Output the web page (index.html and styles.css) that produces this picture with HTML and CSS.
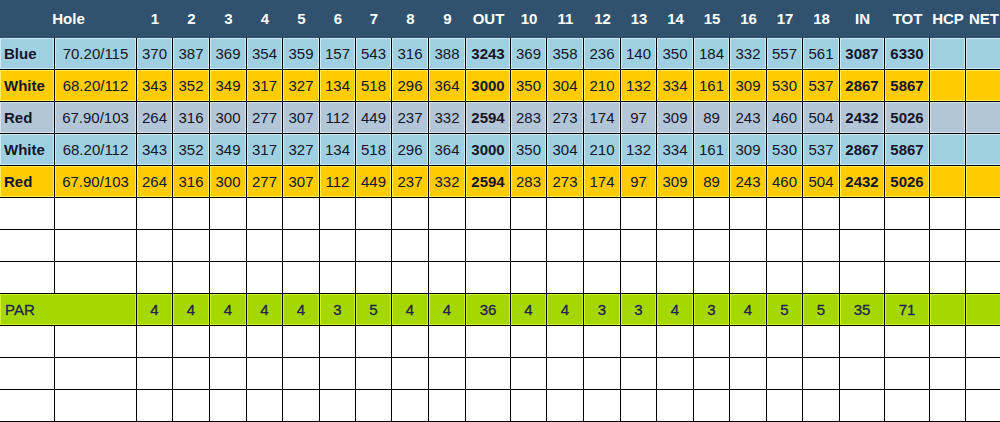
FILE: index.html
```html
<!DOCTYPE html>
<html>
<head>
<meta charset="utf-8">
<link rel="stylesheet" href="styles.css">
</head>
<body>
<div class="card">
  <div class="row head">
    <div class="c span2">Hole</div>
    <div class="c">1</div><div class="c">2</div><div class="c">3</div><div class="c">4</div><div class="c">5</div><div class="c">6</div><div class="c">7</div><div class="c">8</div><div class="c">9</div>
    <div class="c">OUT</div>
    <div class="c">10</div><div class="c">11</div><div class="c">12</div><div class="c">13</div><div class="c">14</div><div class="c">15</div><div class="c">16</div><div class="c">17</div><div class="c">18</div>
    <div class="c">IN</div><div class="c">TOT</div><div class="c">HCP</div><div class="c">NET</div>
  </div>

  <div class="row blue">
    <div class="c lbl">Blue</div><div class="c">70.20/115</div>
    <div class="c">370</div><div class="c">387</div><div class="c">369</div><div class="c">354</div><div class="c">359</div><div class="c">157</div><div class="c">543</div><div class="c">316</div><div class="c">388</div>
    <div class="c b">3243</div>
    <div class="c">369</div><div class="c">358</div><div class="c">236</div><div class="c">140</div><div class="c">350</div><div class="c">184</div><div class="c">332</div><div class="c">557</div><div class="c">561</div>
    <div class="c b">3087</div><div class="c b">6330</div><div class="c"></div><div class="c"></div>
  </div>

  <div class="row yellow">
    <div class="c lbl">White</div><div class="c">68.20/112</div>
    <div class="c">343</div><div class="c">352</div><div class="c">349</div><div class="c">317</div><div class="c">327</div><div class="c">134</div><div class="c">518</div><div class="c">296</div><div class="c">364</div>
    <div class="c b">3000</div>
    <div class="c">350</div><div class="c">304</div><div class="c">210</div><div class="c">132</div><div class="c">334</div><div class="c">161</div><div class="c">309</div><div class="c">530</div><div class="c">537</div>
    <div class="c b">2867</div><div class="c b">5867</div><div class="c"></div><div class="c"></div>
  </div>

  <div class="row gray">
    <div class="c lbl">Red</div><div class="c">67.90/103</div>
    <div class="c">264</div><div class="c">316</div><div class="c">300</div><div class="c">277</div><div class="c">307</div><div class="c">112</div><div class="c">449</div><div class="c">237</div><div class="c">332</div>
    <div class="c b">2594</div>
    <div class="c">283</div><div class="c">273</div><div class="c">174</div><div class="c">97</div><div class="c">309</div><div class="c">89</div><div class="c">243</div><div class="c">460</div><div class="c">504</div>
    <div class="c b">2432</div><div class="c b">5026</div><div class="c"></div><div class="c"></div>
  </div>

  <div class="row blue">
    <div class="c lbl">White</div><div class="c">68.20/112</div>
    <div class="c">343</div><div class="c">352</div><div class="c">349</div><div class="c">317</div><div class="c">327</div><div class="c">134</div><div class="c">518</div><div class="c">296</div><div class="c">364</div>
    <div class="c b">3000</div>
    <div class="c">350</div><div class="c">304</div><div class="c">210</div><div class="c">132</div><div class="c">334</div><div class="c">161</div><div class="c">309</div><div class="c">530</div><div class="c">537</div>
    <div class="c b">2867</div><div class="c b">5867</div><div class="c"></div><div class="c"></div>
  </div>

  <div class="row yellow">
    <div class="c lbl">Red</div><div class="c">67.90/103</div>
    <div class="c">264</div><div class="c">316</div><div class="c">300</div><div class="c">277</div><div class="c">307</div><div class="c">112</div><div class="c">449</div><div class="c">237</div><div class="c">332</div>
    <div class="c b">2594</div>
    <div class="c">283</div><div class="c">273</div><div class="c">174</div><div class="c">97</div><div class="c">309</div><div class="c">89</div><div class="c">243</div><div class="c">460</div><div class="c">504</div>
    <div class="c b">2432</div><div class="c b">5026</div><div class="c"></div><div class="c"></div>
  </div>

  <div class="row blank">
    <div class="c"></div><div class="c"></div><div class="c"></div><div class="c"></div><div class="c"></div><div class="c"></div><div class="c"></div><div class="c"></div><div class="c"></div><div class="c"></div><div class="c"></div><div class="c"></div><div class="c"></div><div class="c"></div><div class="c"></div><div class="c"></div><div class="c"></div><div class="c"></div><div class="c"></div><div class="c"></div><div class="c"></div><div class="c"></div><div class="c"></div><div class="c"></div><div class="c"></div>
  </div>
  <div class="row blank">
    <div class="c"></div><div class="c"></div><div class="c"></div><div class="c"></div><div class="c"></div><div class="c"></div><div class="c"></div><div class="c"></div><div class="c"></div><div class="c"></div><div class="c"></div><div class="c"></div><div class="c"></div><div class="c"></div><div class="c"></div><div class="c"></div><div class="c"></div><div class="c"></div><div class="c"></div><div class="c"></div><div class="c"></div><div class="c"></div><div class="c"></div><div class="c"></div><div class="c"></div>
  </div>
  <div class="row blank">
    <div class="c"></div><div class="c"></div><div class="c"></div><div class="c"></div><div class="c"></div><div class="c"></div><div class="c"></div><div class="c"></div><div class="c"></div><div class="c"></div><div class="c"></div><div class="c"></div><div class="c"></div><div class="c"></div><div class="c"></div><div class="c"></div><div class="c"></div><div class="c"></div><div class="c"></div><div class="c"></div><div class="c"></div><div class="c"></div><div class="c"></div><div class="c"></div><div class="c"></div>
  </div>

  <div class="row green">
    <div class="c span2 lbl par">PAR</div>
    <div class="c">4</div><div class="c">4</div><div class="c">4</div><div class="c">4</div><div class="c">4</div><div class="c">3</div><div class="c">5</div><div class="c">4</div><div class="c">4</div>
    <div class="c">36</div>
    <div class="c">4</div><div class="c">4</div><div class="c">3</div><div class="c">3</div><div class="c">4</div><div class="c">3</div><div class="c">4</div><div class="c">5</div><div class="c">5</div>
    <div class="c">35</div><div class="c">71</div><div class="c"></div><div class="c"></div>
  </div>

  <div class="row blank">
    <div class="c"></div><div class="c"></div><div class="c"></div><div class="c"></div><div class="c"></div><div class="c"></div><div class="c"></div><div class="c"></div><div class="c"></div><div class="c"></div><div class="c"></div><div class="c"></div><div class="c"></div><div class="c"></div><div class="c"></div><div class="c"></div><div class="c"></div><div class="c"></div><div class="c"></div><div class="c"></div><div class="c"></div><div class="c"></div><div class="c"></div><div class="c"></div><div class="c"></div>
  </div>
  <div class="row blank">
    <div class="c"></div><div class="c"></div><div class="c"></div><div class="c"></div><div class="c"></div><div class="c"></div><div class="c"></div><div class="c"></div><div class="c"></div><div class="c"></div><div class="c"></div><div class="c"></div><div class="c"></div><div class="c"></div><div class="c"></div><div class="c"></div><div class="c"></div><div class="c"></div><div class="c"></div><div class="c"></div><div class="c"></div><div class="c"></div><div class="c"></div><div class="c"></div><div class="c"></div>
  </div>
  <div class="row blank">
    <div class="c"></div><div class="c"></div><div class="c"></div><div class="c"></div><div class="c"></div><div class="c"></div><div class="c"></div><div class="c"></div><div class="c"></div><div class="c"></div><div class="c"></div><div class="c"></div><div class="c"></div><div class="c"></div><div class="c"></div><div class="c"></div><div class="c"></div><div class="c"></div><div class="c"></div><div class="c"></div><div class="c"></div><div class="c"></div><div class="c"></div><div class="c"></div><div class="c"></div>
  </div>
</div>
</body>
</html>
```

FILE: styles.css
```css
html, body {
  margin: 0;
  padding: 0;
  overflow: hidden;
  background: #ffffff;
}

.card {
  display: grid;
  grid-template-columns: 55px 82px 36px 37px 37px 36px 37px 36px 36px 37px 37px 45px 36px 37px 37px 36px 37px 36px 37px 36px 37px 45px 45px 36px 36px;
  grid-template-rows: 38px;
  grid-auto-rows: 32px;
  width: 1002px;
  font-family: "Liberation Sans", Arial, sans-serif;
  font-size: 15px;
  color: #15152a;
}

.row {
  display: contents;
}

.c {
  box-sizing: border-box;
  display: flex;
  align-items: center;
  justify-content: center;
  border-right: 1px solid #000;
  border-bottom: 1px solid #000;
  white-space: nowrap;
}

.span2 {
  grid-column: span 2;
}

.lbl {
  justify-content: flex-start;
  padding-left: 4px;
  font-weight: bold;
}

.b {
  font-weight: bold;
}

.head .c {
  background: #30526f;
  color: #ffffff;
  font-weight: bold;
  border: none;
  padding-bottom: 2px;
}

.head .span2 {
  justify-content: center;
  padding-left: 0;
}

.blue .c {
  background: #9fd0e1;
  box-shadow: inset 0 0 0 1px #cfeaf2;
}

.yellow .c {
  background: #ffcc00;
  box-shadow: inset 0 0 0 1px #fff05a;
}

.gray .c {
  background: #b3c6d7;
  box-shadow: inset 0 0 0 1px #d8e3ec;
}

.green .c {
  background: #a5d800;
  box-shadow: inset 0 0 0 1px #d2f02e;
  color: #22224a;
  -webkit-text-stroke: 0.3px #22224a;
}

.green .par {
  font-weight: normal;
  padding-left: 5px;
}

.blank .c {
  background: #ffffff;
}
```
